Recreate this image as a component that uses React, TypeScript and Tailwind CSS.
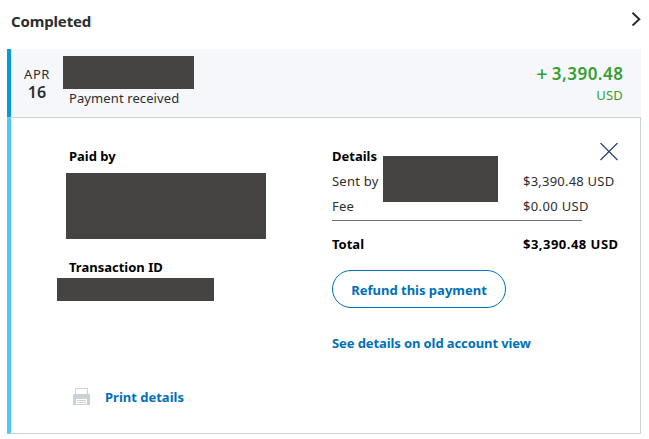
import type { ReactNode } from "react";

function Redacted({ className }: { className: string }) {
  return <div className={`shrink-0 bg-[#464442] ${className}`} />;
}

function Label({ children, className = "" }: { children: ReactNode; className?: string }) {
  return (
    <h3 className={`h-4 text-[13px] leading-4 font-bold text-black ${className}`}>{children}</h3>
  );
}

function Header() {
  return (
    <header className="flex h-[49px] items-start justify-between pt-[11px] pr-[8px] pl-[11px]">
      <h2 className="text-[15px] leading-5 font-bold tracking-[-0.15px] text-[#2c2e2f]">Completed</h2>
      <svg width="10" height="16" viewBox="0 0 10 16" fill="none" stroke="#2c2e2f" strokeWidth="2">
        <path d="M1.5 1.8 L8.3 8.2 L1.5 14.4" />
      </svg>
    </header>
  );
}

function SummaryRow() {
  return (
    <div className="flex h-[68px] border-l-4 border-[#009cde] bg-[#f5f7fa] pt-[7px] pr-[18px]">
      <div className="w-[52px] shrink-0 pt-[9px] text-center text-[#2c2e2f]">
        <div className="h-[18px] text-[13px] leading-[18px] tracking-[0.5px]">APR</div>
        <div className="h-[18px] text-[16px] leading-[18px] font-semibold">16</div>
      </div>
      <div className="flex-1">
        <Redacted className="h-[33px] w-[131px]" />
        <p className="pl-[6px] text-[13px] leading-[19px] tracking-[0.1px] text-[#2c2e2f]">Payment received</p>
      </div>
      <div className="pt-[6px] text-[#36a030]">
        <div className="flex h-[24px] items-center justify-end gap-1 text-[17px] leading-[24px] font-medium">
          <span className="text-[20px]">+</span>
          <span className="tracking-[0.5px] -mr-[0.5px] font-semibold">3,390.48</span>
        </div>
        <div className="h-[18px] text-right text-[13px] leading-[19px] tracking-[0.2px]">USD</div>
      </div>
    </div>
  );
}

function PrinterIcon() {
  return (
    <svg width="18" height="18" viewBox="0 0 18 18">
      <path d="M2.5 6V.5h12V6" fill="none" stroke="#cbd2d6" />
      <path d="M1 6h15l1 1v10H0V7z" fill="#cbd2d6" />
      <path d="M3 11h11v5H3z" fill="#fff" />
      <path d="M4 12.5h9M4 14.5h9" stroke="#cbd2d6" />
    </svg>
  );
}

function PayerColumn() {
  return (
    <section className="flex w-[321px] shrink-0 flex-col pt-[30px] pl-[46px]">
      <Label className="ml-3">Paid by</Label>
      <Redacted className="mt-[9px] ml-[9px] h-[66px] w-[200px]" />
      <Label className="mt-5 ml-3">Transaction ID</Label>
      <Redacted className="mt-[3px] h-[23px] w-[157px]" />
      <button className="mt-[87px] ml-4 flex h-[18px] items-center gap-[14px] self-start text-[13px] leading-[18px] font-bold text-[#0070ba]">
        <PrinterIcon />
        <span>Print details</span>
      </button>
    </section>
  );
}

function DetailsColumn() {
  return (
    <section className="flex-1 pt-[25px] text-[13px] text-[#2c2e2f]">
      <div className="flex h-[26px] items-start justify-between pr-[22px]">
        <Label className="mt-[5px]">Details</Label>
        <svg width="18" height="18" viewBox="0 0 18 18" stroke="#24406e" strokeWidth="1.2">
          <path d="M.5 0l17 17M17.5 0l-17 17" />
        </svg>
      </div>
      <div className="relative grid h-[51px] grid-cols-[191px_1fr] grid-rows-[25px_25px] leading-[25px] tracking-[0.22px]">
        <span>Sent by</span>
        <span>$3,390.48 USD</span>
        <span>Fee</span>
        <span className="tracking-[0.35px]">$0.00 USD</span>
        <Redacted className="absolute -top-[13px] left-[51px] h-[46px] w-[115px]" />
      </div>
      <hr className="h-px w-[250px] border-0 bg-[#6c7378]" />
      <div className="mt-[11px] grid grid-cols-[191px_1fr] leading-[24px] font-bold text-black">
        <span>Total</span>
        <span className="tracking-[0.48px]">$3,390.48 USD</span>
      </div>
      <button className="mt-[14px] flex h-[38px] w-[174px] items-center justify-center rounded-full border border-[#0070ba] pt-[3px] text-[13px] font-bold text-[#0070ba]">
        Refund this payment
      </button>
      <a className="mt-[26px] block leading-[18px] font-bold tracking-[-0.1px] text-[#0070ba]">
        See details on old account view
      </a>
    </section>
  );
}

export default function App() {
  return (
    <div className="h-[439px] w-[649px] overflow-hidden bg-white font-['Noto_Sans',sans-serif] whitespace-nowrap">
      <Header />
      <article className="ml-[7px] w-[634px]">
        <SummaryRow />
        <div className="flex h-[317px] border-y border-r border-l-4 border-[#cbd2d6] border-l-[#4fc7f9] bg-white">
          <PayerColumn />
          <DetailsColumn />
        </div>
      </article>
    </div>
  );
}
